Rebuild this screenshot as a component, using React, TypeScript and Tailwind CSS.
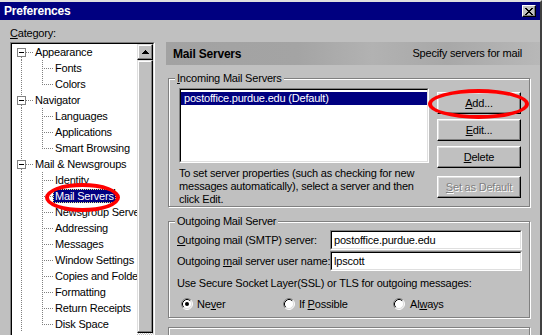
import React from 'react';

type TreeItem = { label: string; top?: boolean; first?: boolean; last?: boolean; selected?: boolean };

const tree: TreeItem[] = [
  { label: 'Appearance', top: true, first: true },
  { label: 'Fonts' },
  { label: 'Colors', last: true },
  { label: 'Navigator', top: true },
  { label: 'Languages' },
  { label: 'Applications' },
  { label: 'Smart Browsing', last: true },
  { label: 'Mail & Newsgroups', top: true },
  { label: 'Identity' },
  { label: 'Mail Servers', selected: true },
  { label: 'Newsgroup Servers' },
  { label: 'Addressing' },
  { label: 'Messages' },
  { label: 'Window Settings' },
  { label: 'Copies and Folders' },
  { label: 'Formatting' },
  { label: 'Return Receipts' },
  { label: 'Disk Space', last: true },
];

const dot = { stroke: '#808080', strokeDasharray: '1 1' };

const TopConnector = ({ first }: { first?: boolean }) => (
  <svg width="21" height="16" className="shrink-0" shapeRendering="crispEdges">
    {!first && <line x1="9.5" y1="0" x2="9.5" y2="4" {...dot} />}
    <line x1="9.5" y1="13" x2="9.5" y2="16" {...dot} />
    <line x1="14" y1="8.5" x2="21" y2="8.5" {...dot} />
    <rect x="5.5" y="4.5" width="8" height="8" fill="#fff" stroke="#808080" />
    <line x1="7" y1="8.5" x2="12" y2="8.5" stroke="#000" />
  </svg>
);

const ChildConnector = ({ last }: { last?: boolean }) => (
  <svg width="41" height="16" className="shrink-0" shapeRendering="crispEdges">
    <line x1="9.5" y1="0" x2="9.5" y2="16" {...dot} />
    <line x1="30.5" y1="0" x2="30.5" y2={last ? 9 : 16} {...dot} />
    <line x1="32" y1="8.5" x2="41" y2="8.5" {...dot} />
  </svg>
);

const Button = ({ children, disabled }: { children: React.ReactNode; disabled?: boolean }) => (
  <div
    className={
      'h-[22px] w-[84px] flex items-center justify-center bg-[#c0c0c0] border border-t-white border-l-white border-r-black border-b-black shadow-[inset_-1px_-1px_0_#808080,inset_1px_1px_0_#dfdfdf] ' +
      (disabled ? 'text-[#808080] [text-shadow:1px_1px_0_#fff]' : 'text-black')
    }
  >
    {children}
  </div>
);

const Radio = ({ checked }: { checked?: boolean }) => (
  <svg width="12" height="12" className="shrink-0">
    <circle cx="6" cy="6" r="5" fill="#fff" />
    <path d="M2.11 9.89 A5.5 5.5 0 0 1 9.89 2.11" fill="none" stroke="#808080" />
    <path d="M9.89 2.11 A5.5 5.5 0 0 1 2.11 9.89" fill="none" stroke="#fff" />
    <path d="M2.82 9.18 A4.5 4.5 0 0 1 9.18 2.82" fill="none" stroke="#000" />
    <path d="M9.18 2.82 A4.5 4.5 0 0 1 2.82 9.18" fill="none" stroke="#dfdfdf" />
    {checked && <circle cx="6" cy="6" r="2" fill="#000" />}
  </svg>
);

const Field = ({ value }: { value: string }) => (
  <div className="w-[192px] h-[20px] border border-t-[#808080] border-l-[#808080] border-r-white border-b-white">
    <div className="h-full border border-t-black border-l-black border-r-[#dfdfdf] border-b-[#dfdfdf] bg-white flex items-center pl-[2px]">
      {value}
    </div>
  </div>
);

const u = (s: string) => <span className="underline underline-offset-[1px]">{s}</span>;

export default function App() {
  return (
    <div className="relative w-[542px] h-[335px] overflow-hidden bg-[#c0c0c0] border-t-2 border-t-[#dfdfdf] border-r-2 border-r-[#404040] flex flex-col font-['Liberation_Sans',Arial,sans-serif] text-[11px] tracking-[-0.2px] text-black">
      {/* title bar */}
      <div className="h-[18px] shrink-0 bg-[#000080] flex items-center justify-between pl-[4px] pr-[4px]">
        <span className="text-white font-bold text-[12px]">Preferences</span>
        <div className="w-[14px] h-[12px] flex items-center justify-center bg-[#c0c0c0] border border-t-white border-l-white border-r-black border-b-black shadow-[inset_-1px_-1px_0_#808080]">
          <svg width="8" height="7" shapeRendering="crispEdges">
            <path d="M0 0h2l2 2.5L6 0h2L5 3.5 8 7H6L4 4.5 2 7H0l3-3.5z" fill="#000" />
          </svg>
        </div>
      </div>

      <div className="flex flex-1">
        {/* category tree */}
        <div className="w-[166px] shrink-0 pl-[10px] pt-[6px]">
          <div className="leading-[14px]">{u('C')}ategory:</div>
          <div className="mt-[2px] w-[145px] h-[300px] border border-t-[#808080] border-l-[#808080] border-r-white border-b-white">
            <div className="h-full flex border border-t-black border-l-black border-r-[#dfdfdf] border-b-[#dfdfdf] bg-white">
              <div className="flex-1 overflow-hidden">
                {tree.map((item) => (
                  <div key={item.label} className="h-[16px] flex items-center whitespace-nowrap">
                    {item.top ? <TopConnector first={item.first} /> : <ChildConnector last={item.last} />}
                    <span
                      className={
                        'px-[2px] leading-[14px] ' +
                        (item.selected
                          ? 'bg-[#000080] text-white outline outline-1 outline-dotted outline-[#e8e880] -outline-offset-1'
                          : '')
                      }
                    >
                      {item.label}
                    </span>
                  </div>
                ))}
              </div>
              <div className="w-[16px] shrink-0 flex flex-col bg-[image:repeating-conic-gradient(#fff_0_25%,#c0c0c0_0_50%)] bg-[length:2px_2px]">
                <div className="h-[16px] flex items-center justify-center bg-[#c0c0c0] border border-t-[#dfdfdf] border-l-[#dfdfdf] border-r-black border-b-black shadow-[inset_-1px_-1px_0_#808080,inset_1px_1px_0_#fff]">
                  <svg width="7" height="4" shapeRendering="crispEdges">
                    <path d="M3 0h1v1H3zM2 1h3v1H2zM1 2h5v1H1zM0 3h7v1H0z" fill="#000" />
                  </svg>
                </div>
                <div className="h-[273px] bg-[#c0c0c0] border border-t-[#dfdfdf] border-l-[#dfdfdf] border-r-black border-b-black shadow-[inset_-1px_-1px_0_#808080,inset_1px_1px_0_#fff]" />
              </div>
            </div>
          </div>
        </div>

        {/* right panel */}
        <div className="w-[374px] shrink-0 pt-[22px]">
          <div className="h-[23px] flex items-center justify-between pl-[7px] pr-[18px] bg-[linear-gradient(90deg,#a2a2a2,#a4a4a4_35%,#b2b2b2_55%,#a8a8a8_75%,#b8b8b8)]">
            <span className="font-bold text-[12px]">Mail Servers</span>
            <span>Specify servers for mail</span>
          </div>

          <fieldset className="mt-[7px] ml-[2px] w-[362px] h-[135px] border border-[#808080] shadow-[inset_1px_1px_0_#fff,1px_1px_0_#fff]">
            <legend className="ml-[6px] px-[2px] leading-[13px] bg-[#c0c0c0]">{u('I')}ncoming Mail Servers</legend>
            <div className="flex pl-[10px]">
              <div className="w-[250px] pt-[3px]">
                <div className="h-[75px] border border-t-[#808080] border-l-[#808080] border-r-white border-b-white">
                  <div className="h-full border border-t-black border-l-black border-r-[#dfdfdf] border-b-[#dfdfdf] bg-white">
                    <div className="mt-[2px] h-[13px] leading-[13px] bg-[#000080] text-white pl-[3px] whitespace-nowrap">
                      postoffice.purdue.edu (Default)
                    </div>
                  </div>
                </div>
                <div className="mt-[4px] leading-[13px] whitespace-nowrap">
                  To set server properties (such as checking for new
                  <br />
                  messages automatically), select a server and then
                  <br />
                  click Edit.
                </div>
              </div>
              <div className="ml-[8px] pt-[7px] flex flex-col gap-[5px]">
                <Button>{u('A')}dd...</Button>
                <Button>{u('E')}dit...</Button>
                <Button>{u('D')}elete</Button>
                <div className="mt-[3px]">
                  <Button disabled>{u('S')}et as Default</Button>
                </div>
              </div>
            </div>
          </fieldset>

          <fieldset className="mt-[8px] ml-[2px] w-[362px] h-[103px] border border-[#808080] shadow-[inset_1px_1px_0_#fff,1px_1px_0_#fff]">
            <legend className="ml-[6px] px-[2px] leading-[13px] bg-[#c0c0c0]">Outgoing Mail Server</legend>
            <div className="pl-[8px] pt-[2px]">
              <div className="flex items-center h-[20px]">
                <div className="w-[153px] whitespace-nowrap">{u('O')}utgoing mail (SMTP) server:</div>
                <Field value="postoffice.purdue.edu" />
              </div>
              <div className="flex items-center h-[20px] mt-[1px]">
                <div className="w-[153px] whitespace-nowrap">Outgoing {u('m')}ail server user name:</div>
                <Field value="lpscott" />
              </div>
              <div className="mt-[5px] leading-[14px] whitespace-nowrap">
                Use Secure Socket Layer(SSL) or TLS for outgoing messages:
              </div>
              <div className="mt-[7px] h-[14px] flex items-center pl-[4px]">
                <div className="w-[102px] flex items-center gap-[4px]">
                  <Radio checked />
                  <span>Ne{u('v')}er</span>
                </div>
                <div className="w-[110px] flex items-center gap-[4px]">
                  <Radio />
                  <span>If {u('P')}ossible</span>
                </div>
                <div className="flex items-center gap-[5px]">
                  <Radio />
                  <span>Al{u('w')}ays</span>
                </div>
              </div>
            </div>
          </fieldset>

          <div className="mt-[9px] ml-[2px] w-[362px] h-[40px] border border-[#808080] shadow-[inset_1px_1px_0_#fff,1px_1px_0_#fff]" />
        </div>
      </div>

      {/* red highlight rings */}
      <div className="absolute left-[45px] top-[181px] w-[75px] h-[29px] rounded-[50%] border-4 border-[#f00]" />
      <div className="absolute left-[428px] top-[87px] w-[101px] h-[30px] rounded-[50%] border-4 border-[#f00]" />
    </div>
  );
}
